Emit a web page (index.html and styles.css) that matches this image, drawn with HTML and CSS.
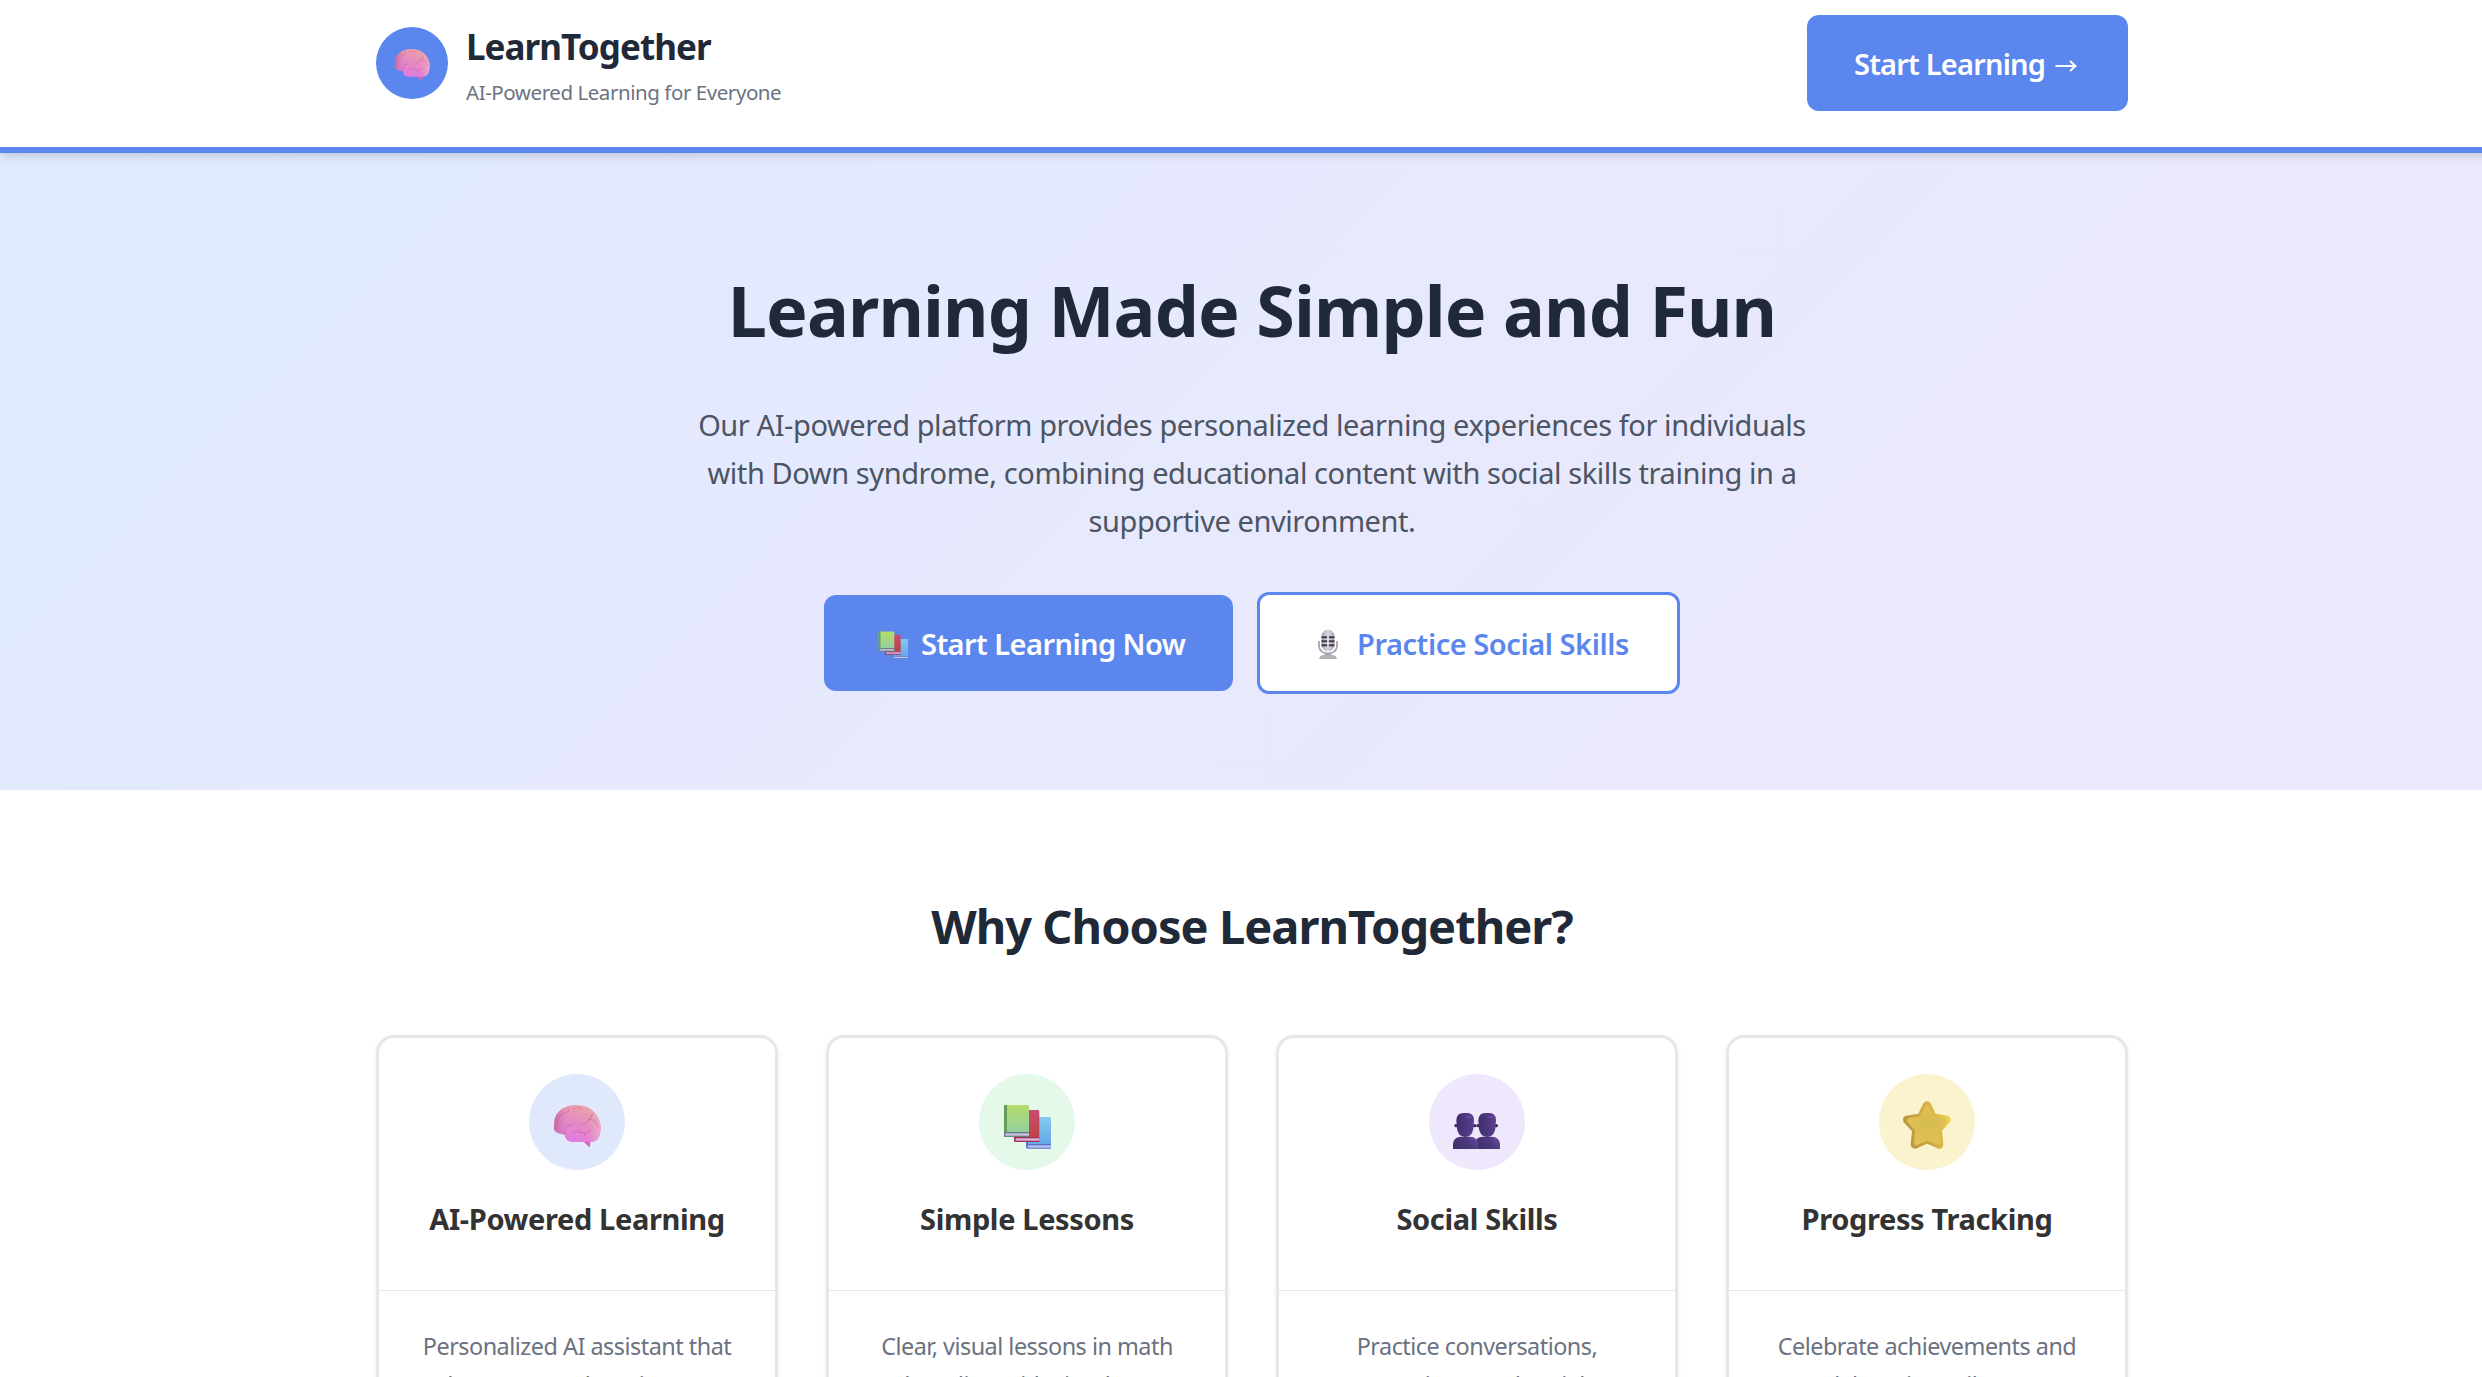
FILE: index.html
```
<!DOCTYPE html>
<html lang="en">
<head>
<meta charset="utf-8">
<title>LearnTogether</title>
<link rel="stylesheet" href="styles.css">
</head>
<body>
<svg class="sprite" width="0" height="0" aria-hidden="true">
  <defs>
    <linearGradient id="brainFill" x1="0.7" y1="0" x2="0.35" y2="1">
      <stop offset="0" stop-color="#eda3a8"/><stop offset="0.45" stop-color="#e58cc0"/><stop offset="1" stop-color="#e07be2"/>
    </linearGradient>
    <linearGradient id="brainEdge" x1="0" y1="0" x2="1" y2="0">
      <stop offset="0" stop-color="#b95f8c" stop-opacity=".75"/><stop offset="0.3" stop-color="#d87bb5" stop-opacity="0"/><stop offset="0.75" stop-color="#f0b4c4" stop-opacity="0"/><stop offset="1" stop-color="#ecb0c6" stop-opacity=".8"/>
    </linearGradient>
    <linearGradient id="greenBook" x1="0" y1="0" x2="0" y2="1"><stop offset="0" stop-color="#b4dc68"/><stop offset="1" stop-color="#93d0a0"/></linearGradient>
    <linearGradient id="redBook" x1="0" y1="0" x2="0" y2="1"><stop offset="0" stop-color="#c94b72"/><stop offset="1" stop-color="#bd4548"/></linearGradient>
    <linearGradient id="blueBook" x1="0" y1="0" x2="0" y2="1"><stop offset="0" stop-color="#86caee"/><stop offset="1" stop-color="#68a7ea"/></linearGradient>
    <linearGradient id="headFill" x1="0" y1="0" x2="1" y2="0"><stop offset="0" stop-color="#3f2f6c"/><stop offset="1" stop-color="#5a3f91"/></linearGradient>
    <linearGradient id="bodyFill" x1="0" y1="0.6" x2="1" y2="0.2"><stop offset="0" stop-color="#41306d"/><stop offset="0.6" stop-color="#4d387e"/><stop offset="1" stop-color="#6a4ca3"/></linearGradient>
    <linearGradient id="starEdge" x1="0" y1="0.6" x2="1" y2="0.3"><stop offset="0" stop-color="#b5963f"/><stop offset="0.6" stop-color="#d3b045"/><stop offset="1" stop-color="#efd94e"/></linearGradient>
    <radialGradient id="starFill"><stop offset="0" stop-color="#d3bd51"/><stop offset="1" stop-color="#e2bf53"/></radialGradient>
    <linearGradient id="micFill" x1="0" y1="0" x2="1" y2="0"><stop offset="0" stop-color="#aaa6ae"/><stop offset="0.5" stop-color="#dad7dd"/><stop offset="1" stop-color="#aaa4b2"/></linearGradient>
    <symbol id="brain" viewBox="579 243 144 144">
      <path d="M668 362 L691 362 L690 381 Q686 382 682 376 Z" fill="#df62b9"/>
      <path d="M583 307 C585 272 615 255 650 255 C690 256 716 279 722 317 C723 345 716 364 696 366 L640 366 C624 366 616 358 614 344 C596 342 581 335 582 324 Z" fill="url(#brainFill)"/>
      <path d="M583 307 C585 272 615 255 650 255 C690 256 716 279 722 317 C723 345 716 364 696 366 L640 366 C624 366 616 358 614 344 C596 342 581 335 582 324 Z" fill="url(#brainEdge)"/>
      <g fill="none" stroke="#c65f91" stroke-opacity=".8" stroke-width="2.2" stroke-linecap="round" stroke-linejoin="round">
        <path d="M592 314 C590 295 603 281 618 277 C629 276 628 267 623 264"/>
        <path d="M614 342 C611 331 617 323 626 317 L620 312 M626 317 L637 314"/>
        <path d="M667 313 C678 311 684 300 690 298 C702 298 711 308 714 320 M688 298 L697 283"/>
        <path d="M640 337 C656 333 664 341 680 338 L692 330 M673 340 L677 349 M657 335 L657 329"/>
        <path d="M640 267 L646 264 M653 263 L665 265"/>
      </g>
    </symbol>
    <symbol id="books" viewBox="579 243 144 144">
      <path d="M648 291 H719 Q723 291 723 295 V372 H648 Z" fill="url(#blueBook)"/>
      <path d="M648 364 L654 366 V372 H723 V386 H652 Q648 386 648 382 Z" fill="#5674cb"/>
      <path d="M653 376 H723 V383 H653 Z" fill="#bdc2ee"/>
      <path d="M612 270 H684 Q688 270 688 275 V351 H612 Z" fill="url(#redBook)"/>
      <path d="M612 347 H618 V351 H688 V366 H616 Q612 366 612 362 Z" fill="#a13456"/>
      <path d="M617 355 H688 V362 H617 Z" fill="#dcb9dc"/>
      <path d="M582 255 H653 Q657 255 657 259 V337 H582 Z" fill="url(#greenBook)"/>
      <path d="M582 255 H591 V337 H657 V350 H582 Z" fill="#669b5a"/>
      <path d="M582 336 H657 V350 H582 Z" fill="#64798a"/>
      <path d="M586 340 H657 V347 H586 Z" fill="#d1c5e2"/>
    </symbol>
    <symbol id="people" viewBox="579 243 144 144">
      <circle cx="654" cy="317" r="5" fill="#35265b"/><circle cx="709" cy="317" r="5" fill="#35265b"/>
      <path d="M644 387 V371 Q646 351 668 350 H696 Q718 351 720 371 V387 Z" fill="url(#bodyFill)"/>
      <path d="M655 300 Q656 279 676 279 H688 Q708 280 708 300 L706 327 Q701 351 681 351 Q661 350 657 327 Z" fill="url(#headFill)"/>
      <ellipse cx="692" cy="291" rx="10" ry="4" fill="#6c4fa5" opacity=".65"/>
      <circle cx="588" cy="317" r="5" fill="#35265b"/><circle cx="644" cy="317" r="5" fill="#35265b"/>
      <path d="M579 387 V371 Q581 351 603 350 H631 Q652 351 654 371 V387 Z" fill="url(#bodyFill)"/>
      <path d="M589 300 Q590 279 610 279 H622 Q642 280 642 300 L640 327 Q635 351 615 351 Q595 350 591 327 Z" fill="url(#headFill)"/>
      <ellipse cx="626" cy="291" rx="10" ry="4" fill="#6c4fa5" opacity=".65"/>
    </symbol>
    <symbol id="star" viewBox="579 243 144 144">
      <path d="M640 250 Q651 237 662 250 L677 281 L713 287 Q727 293 720 306 L696 332 L700 373 Q699 388 686 386 L651 371 L617 386 Q603 387 602 373 L606 334 L581 307 Q575 292 588 287 L625 281 Z" fill="url(#starEdge)"/>
      <path d="M645 257 Q651 248 657 257 L671 288 L706 294 Q712 298 708 303 L689 329 L693 370 Q691 376 685 374 L651 362 L620 376 Q611 376 612 368 L615 330 L592 305 Q589 297 596 294 L630 289 Z" fill="url(#starFill)"/>
    </symbol>
    <symbol id="mic" viewBox="0 0 30 30">
      <path d="M9 22 Q15 28 21 22 L18 25 V27 H12 V25 Z" fill="#aaa6af"/>
      <path d="M6 30 Q7 26 11 26 H19 Q23 26 24 30 Z" fill="#b2adb7"/>
      <path d="M6 12 V17 Q7 24.5 15 24.5 Q23 24.5 24 17 V12" fill="none" stroke="#a7a1ae" stroke-width="1.8"/>
      <rect x="8.5" y="0.5" width="13" height="22" rx="6.5" fill="url(#micFill)"/>
      <path d="M8.5 8.2 H14.2 M15.8 8.2 H21.5 M8.5 12.2 H14.2 M15.8 12.2 H21.5 M8.5 16.2 H14.2 M15.8 16.2 H21.5" stroke="#42364f" stroke-width="1.9"/>
      <path d="M15 7 V17" stroke="#eeeaf1" stroke-width="1"/>
    </symbol>
  </defs>
</svg>

<header class="site-header">
  <div class="container header-row">
    <div class="brand">
      <div class="brand-mark"><svg class="icon-36"><use href="#brain"/></svg></div>
      <div class="brand-text">
        <div class="brand-name">LearnTogether</div>
        <div class="brand-tag">AI-Powered Learning for Everyone</div>
      </div>
    </div>
    <a class="btn btn-primary btn-header"><span>Start Learning</span><svg class="arrow" viewBox="0 0 22 12"><path d="M0.5 6 H20 M15 1 L20.5 6 L15 11" fill="none" stroke="currentColor" stroke-width="1.9"/></svg></a>
  </div>
</header>

<section class="hero">
  <h1>Learning Made Simple and Fun</h1>
  <p class="lead">Our AI-powered platform provides personalized learning experiences for individuals<br>with Down syndrome, combining educational content with social skills training in a<br>supportive environment.</p>
  <div class="actions">
    <a class="btn btn-primary btn-start"><svg class="icon-30"><use href="#books"/></svg><span>Start Learning Now</span></a>
    <a class="btn btn-outline"><svg class="icon-30"><use href="#mic"/></svg><span>Practice Social Skills</span></a>
  </div>
</section>

<section class="features">
  <h2>Why Choose LearnTogether?</h2>
  <div class="container grid">
    <article class="card">
      <div class="card-head"><div class="badge blue"><svg class="icon-48"><use href="#brain"/></svg></div><h3>AI-Powered Learning</h3></div>
      <p>Personalized AI assistant that<br>adapts to your learning pace</p>
    </article>
    <article class="card">
      <div class="card-head"><div class="badge green"><svg class="icon-48"><use href="#books"/></svg></div><h3>Simple Lessons</h3></div>
      <p>Clear, visual lessons in math<br>and reading with simple steps</p>
    </article>
    <article class="card">
      <div class="card-head"><div class="badge purple"><svg class="icon-48"><use href="#people"/></svg></div><h3>Social Skills</h3></div>
      <p>Practice conversations,<br>emotions, and social</p>
    </article>
    <article class="card">
      <div class="card-head"><div class="badge yellow"><svg class="icon-48"><use href="#star"/></svg></div><h3>Progress Tracking</h3></div>
      <p>Celebrate achievements and<br>track learning milestones</p>
    </article>
  </div>
</section>
</body>
</html>
```

FILE: styles.css
```
* { box-sizing: border-box; margin: 0; padding: 0; }
html { overflow: hidden; }
body {
  width: 2504px;
  height: 1377px;
  overflow: hidden;
  background: #fff;
  color: #1f2937;
  font-family: "Noto Sans", "Open Sans", sans-serif;
}
svg { display: block; flex: none; }
.sprite { position: absolute; }
.container { width: 1752px; margin: 0 auto; }

.site-header {
  position: relative;
  z-index: 1;
  padding: 15px 0 36px;
  background: #fff;
  border-bottom: 6px solid #5b86ee;
  box-shadow: 0 5px 9px -1px rgba(0, 0, 0, .09), 0 3px 6px -2px rgba(0, 0, 0, .07);
}
.header-row { display: flex; justify-content: space-between; align-items: center; }
.brand { display: flex; align-items: center; gap: 18px; }
.brand-mark {
  display: flex; align-items: center; justify-content: center;
  width: 72px; height: 72px; padding-top: 2px;
  border-radius: 50%; background: #5b86ee;
}
.brand-text { display: grid; gap: 8px; padding-top: 6px; }
.brand-name { font-size: 35px; line-height: 44px; font-weight: 700; letter-spacing: -.95px; }
.brand-tag { font-size: 20.5px; line-height: 30px; letter-spacing: -.44px; color: #6b7280; }
.icon-30 { width: 30px; height: 30px; }
.icon-36 { width: 36px; height: 36px; }
.icon-48 { width: 48px; height: 48px; }

.btn {
  display: flex; align-items: center;
  height: 96px; padding-top: 2px;
  border-radius: 12px;
  font-size: 29px; line-height: 48px; font-weight: 600; letter-spacing: -.55px;
  white-space: nowrap;
}
.btn-primary { background: #5b86ee; color: #fff; }
.btn-header { width: 321px; padding-left: 47px; gap: 10px; letter-spacing: -.8px; }
.arrow { width: 22px; height: 12px; margin-top: 4px; }
.btn-start { width: 409px; padding-left: 54px; gap: 13px; }
.btn-outline {
  width: 423px; height: 102px; padding-left: 53px; gap: 14px;
  background: #fff; color: #5b86ee; border: 3px solid #5b86ee;
  letter-spacing: -.45px;
}

.hero {
  height: 637px;
  padding-top: 112px;
  background: linear-gradient(135deg, #dfeafd, #e6e9fd 40%, #ede8fb);
  text-align: center;
}
h1 { font-size: 70px; line-height: 90px; font-weight: 700; letter-spacing: -.87px; }
.lead { margin-top: 46px; font-size: 29px; line-height: 48px; letter-spacing: -.42px; color: #4b5563; }
.actions { display: flex; justify-content: center; align-items: center; gap: 24px; margin-top: 47px; }

.features { padding-top: 106px; }
h2 { font-size: 47px; line-height: 60px; font-weight: 700; letter-spacing: -.97px; text-align: center; }
.grid { display: grid; grid-template-columns: repeat(4, 1fr); gap: 48px; margin-top: 79px; }
.card {
  height: 480px;
  border: 3px solid #e5e7eb; border-radius: 18px;
  background: #fff;
  box-shadow: 0 2px 5px rgba(0, 0, 0, .08);
  text-align: center;
}
.card-head { padding: 36px 0 51px; border-bottom: 1px solid #e5e7eb; }
.badge {
  display: flex; align-items: center; justify-content: center;
  width: 96px; height: 96px; margin: 0 auto 29px; padding-top: 6px;
  border-radius: 50%;
}
.blue { background: #e0e9fc; }
.green { background: #e4f9e9; }
.purple { background: #efe8fd; }
.yellow { background: #fbf2ce; }
h3 { font-size: 29px; line-height: 40px; font-weight: 700; letter-spacing: -.36px; color: #333; }
.card p { padding-top: 36px; font-size: 23.4px; line-height: 39.4px; letter-spacing: -.5px; color: #6b7280; white-space: nowrap; }
```
